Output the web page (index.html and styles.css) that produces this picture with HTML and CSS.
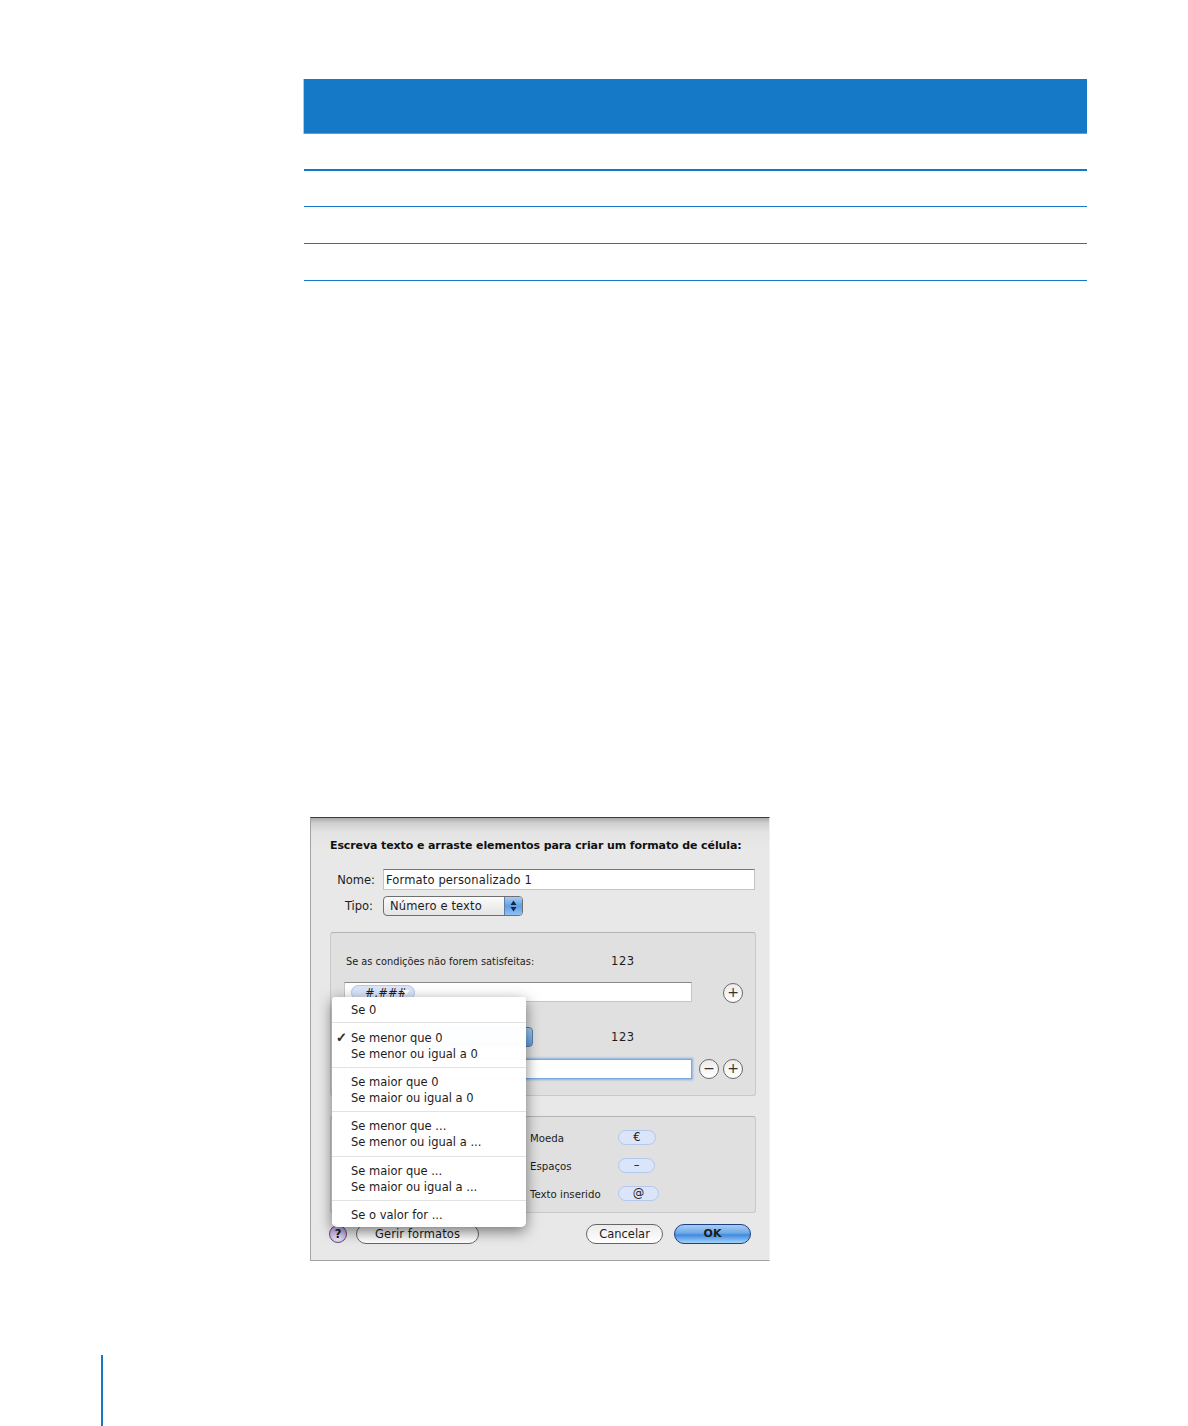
FILE: index.html
```html
<!DOCTYPE html>
<html lang="pt">
<head>
<meta charset="utf-8">
<title>Formato de célula</title>
<link rel="stylesheet" href="styles.css">
</head>
<body>
<div class="table">
  <div class="table-head"></div>
  <div class="table-row first"></div>
  <div class="table-row second-row"></div>
  <div class="table-row"></div>
  <div class="table-row"></div>
</div>

<div class="dialog">
  <div class="dialog-title">Escreva texto e arraste elementos para criar um formato de célula:</div>
  <div class="form-row name-row">
    <span class="form-label">Nome:</span>
    <div class="text-field">Formato personalizado 1</div>
  </div>
  <div class="form-row type-row">
    <span class="form-label">Tipo:</span>
    <div class="select">
      <span class="select-text">Número e texto</span>
      <span class="stepper">
        <svg width="17" height="18" viewBox="0 0 17 18"><path d="M8.5 3.5 L11.5 8 H5.5 Z M8.5 14.5 L5.5 10 H11.5 Z" fill="#10284a"/></svg>
      </span>
    </div>
  </div>

  <div class="panel panel-rules">
    <div class="rule-head">
      <span class="small-label">Se as condições não forem satisfeitas:</span>
      <span class="sample">123</span>
    </div>
    <div class="rule-fields">
      <div class="format-field"><span class="token">#.###<i class="token-arrow"></i></span></div>
      <span class="circle-btn plus-one">+</span>
    </div>
    <div class="rule-head second">
      <div class="cond-select"></div>
      <span class="sample">123</span>
    </div>
    <div class="rule-fields">
      <div class="format-field focused"></div>
      <span class="circle-btn minus">−</span>
      <span class="circle-btn">+</span>
    </div>
  </div>

  <div class="panel panel-elements">
    <div class="element-row"><span class="small-label element-label">Moeda</span><span class="pill pill-euro">€</span></div>
    <div class="element-row"><span class="small-label element-label">Espaços</span><span class="pill pill-space">–</span></div>
    <div class="element-row"><span class="small-label element-label">Texto inserido</span><span class="pill pill-at">@</span></div>
  </div>

  <div class="footer">
    <span class="help">?</span>
    <span class="btn btn-manage">Gerir formatos</span>
    <span class="footer-spacer"></span>
    <span class="btn btn-cancel">Cancelar</span>
    <span class="btn btn-ok">OK</span>
  </div>

  <div class="menu">
    <div class="menu-group top"><div class="menu-item">Se 0</div></div>
    <div class="menu-group shifted"><div class="menu-item"><span class="check">✓</span>Se menor que 0</div><div class="menu-item">Se menor ou igual a 0</div></div>
    <div class="menu-group short"><div class="menu-item">Se maior que 0</div><div class="menu-item">Se maior ou igual a 0</div></div>
    <div class="menu-group"><div class="menu-item">Se menor que ...</div><div class="menu-item">Se menor ou igual a ...</div></div>
    <div class="menu-group short"><div class="menu-item">Se maior que ...</div><div class="menu-item">Se maior ou igual a ...</div></div>
    <div class="menu-group last"><div class="menu-item">Se o valor for ...</div></div>
  </div>
</div>

<div class="page-bar"></div>
</body>
</html>
```
FILE: styles.css
```css
* { box-sizing: border-box; }
html, body { margin: 0; padding: 0; background: #fff; }
body {
  height: 1426px;
  overflow: hidden;
  padding-top: 79px;
  font-family: "DejaVu Sans", "Liberation Sans", sans-serif;
  color: #1c1c1c;
}

/* Table */
.table { margin-left: 304px; width: 783px; }
.table-head {
  height: 55px;
  background: #1579c8;
  border-bottom: 1px solid #58a0da;
  box-shadow: -1px 0 0 #a9cbe8;
}
.table-row { height: 37px; border-bottom: 1px solid #1579c8; }
.table-row.first { height: 37px; border-bottom-width: 2px; }
.table-row.second-row { height: 36px; }

/* Dialog */
.dialog {
  position: relative;
  margin: 536px 0 0 310px;
  width: 460px;
  height: 444px;
  padding: 21px 14px 0 19px;
  background: linear-gradient(#a9a9a9 0, #cfcfcf 5px, #e3e3e3 14px, #e8e8e8 30px);
  border-top: 1px solid #3c3c3c;
  border-left: 1px solid #a2a2a2;
  border-bottom: 1px solid #a2a2a2;
  border-right: 1px solid #f0f0f0;
}
.dialog-title {
  font-size: 11px;
  font-weight: bold;
  line-height: 14px;
  letter-spacing: -.1px;
  white-space: nowrap;
  color: #111;
}
.form-row { display: flex; align-items: center; }
.name-row { margin-top: 16px; height: 21px; }
.type-row { margin-top: 5px; height: 21px; }
.form-label {
  flex: none;
  width: 53px;
  padding-right: 8px;
  text-align: right;
  font-size: 11.5px;
}
.type-row .form-label { padding-right: 10px; }
.text-field {
  width: 374px;
  height: 21px;
  padding-left: 2px;
  font-size: 11.5px;
  line-height: 20px;
  letter-spacing: .15px;
  background: #fff;
  border: 1px solid #c4c4c4;
  border-top-color: #777;
}
.select {
  display: flex;
  align-items: center;
  justify-content: space-between;
  width: 140px;
  height: 20px;
  padding-left: 6px;
  background: linear-gradient(#fbfbfb, #e4e4e4);
  border: 1px solid #6f6f6f;
  border-radius: 4px;
  overflow: hidden;
}
.select-text { font-size: 11.5px; letter-spacing: .15px; }
.stepper {
  display: flex;
  width: 18px;
  height: 18px;
  background: linear-gradient(#a8cdf3 0, #5f9fe3 50%, #8fc1f2 100%);
  border-left: 1px solid #5d7fa8;
}

/* Panels */
.panel {
  background: #e0e0e0;
  border: 1px solid #c9c9c9;
  border-top-color: #b4b4b4;
  border-radius: 3px;
}
.panel-rules { margin-top: 16px; width: 426px; height: 164px; padding: 21px 0 0 13px; }
.rule-head { display: flex; align-items: center; height: 14px; }
.small-label { font-size: 10.2px; white-space: nowrap; }
.rule-head .small-label { width: 265px; margin-left: 2px; font-size: 9.8px; }
.sample { font-size: 11.5px; letter-spacing: .6px; }
.rule-fields { display: flex; align-items: center; margin-top: 14px; }
.format-field {
  display: flex;
  width: 348px;
  height: 20px;
  padding: 2px 0 0 6px;
  background: #fff;
  border: 1px solid #c6c6c6;
  border-top-color: #8a8a8a;
}
.format-field.focused {
  border: 1px solid #7ea8da;
  box-shadow: 0 0 2px 1px #86b3e6;
}
.token {
  position: relative;
  flex: none;
  width: 64px;
  height: 15px;
  padding-left: 13px;
  font-size: 11.5px;
  line-height: 14px;
  font-style: italic;
  background: #dbe5fa;
  border: 1px solid #b4c7ec;
  border-radius: 8px;
}
.token-arrow {
  position: absolute;
  right: 4px;
  top: 4px;
  width: 0;
  height: 0;
  border-left: 4px solid transparent;
  border-right: 4px solid transparent;
  border-top: 5px solid #fff;
}
.circle-btn {
  flex: none;
  width: 20px;
  height: 20px;
  margin-left: 4px;
  font-size: 14px;
  line-height: 17px;
  text-align: center;
  color: #333;
  background: linear-gradient(#ececec, #fff);
  border: 1px solid #686868;
  border-radius: 50%;
}
.circle-btn.minus { margin-left: 7px; }
.circle-btn.plus-one { margin: 1px 0 -1px 31px; }
.rule-head.second { margin-top: 25px; height: 20px; }
.cond-select {
  width: 189px;
  height: 20px;
  margin-right: 78px;
  background: linear-gradient(#a8cdf3, #5f9fe3);
  border: 1px solid #5d7fa8;
  border-radius: 4px;
}
.rule-head.second + .rule-fields { margin-top: 12px; }

.panel-elements {
  margin-top: 20px;
  width: 426px;
  height: 97px;
  padding: 12px 0 0 199px;
}
.element-row { display: flex; align-items: center; height: 17px; margin-bottom: 11px; }
.element-label { flex: none; width: 88px; padding-top: 2px; }
.pill {
  height: 15px;
  font-size: 11.5px;
  line-height: 13px;
  text-align: center;
  background: #dbe5fa;
  border: 1px solid #b4c7ec;
  border-radius: 8px;
}
.pill-euro { width: 38px; }
.pill-space { width: 37px; }
.pill-at { width: 41px; }

/* Footer buttons */
.footer { display: flex; align-items: center; width: 422px; height: 21px; margin: 10px 0 0 -1px; }
.footer-spacer { flex: 1; }
.help {
  flex: none;
  width: 18px;
  height: 18px;
  margin-right: 9px;
  font-size: 11.5px;
  font-weight: bold;
  line-height: 16px;
  text-align: center;
  background: radial-gradient(circle at 50% 80%, #efe6f8, #ad90d2);
  border: 1px solid #5c4b77;
  border-radius: 50%;
}
.btn {
  flex: none;
  height: 20px;
  font-size: 11.5px;
  line-height: 18px;
  text-align: center;
  background: linear-gradient(#ececec, #fff);
  border: 1px solid #666;
  border-radius: 10px;
}
.btn-manage { width: 123px; letter-spacing: .1px; }
.btn-cancel { width: 77px; margin-right: 11px; }
.btn-ok {
  width: 77px;
  font-size: 11px;
  font-weight: bold;
  background: linear-gradient(#a6cdf3 0, #6fa9e8 45%, #3f8ae0 55%, #a4d3fa 100%);
  border-color: #1d3f85;
}

/* Popup menu */
.menu {
  position: absolute;
  left: 21px;
  top: 179px;
  width: 194px;
  height: 230px;
  background: rgba(255, 255, 255, .98);
  border-radius: 3px 3px 5px 5px;
  box-shadow: 0 4px 14px rgba(0, 0, 0, .5);
}
.menu-group { padding: 5.5px 0; border-bottom: 1px solid #e2e2e2; }
.menu-group.top { padding: 5px 0 3.5px; }
.menu-group.shifted { padding: 6.5px 0 4.5px; }
.menu-group.short { padding: 5.5px 0 4.5px; }
.menu-group.last { border-bottom: 0; }
.menu-item {
  position: relative;
  height: 16.5px;
  padding-left: 19px;
  font-size: 11.5px;
  line-height: 16.5px;
  white-space: nowrap;
}
.check {
  position: absolute;
  left: 4px;
  top: 0;
  font-size: 13px;
  font-weight: bold;
  -webkit-text-stroke: .5px #1c1c1c;
}

/* Page bar */
.page-bar { margin: 94px 0 0 101px; width: 2px; height: 71px; background: #1579c8; }
```
